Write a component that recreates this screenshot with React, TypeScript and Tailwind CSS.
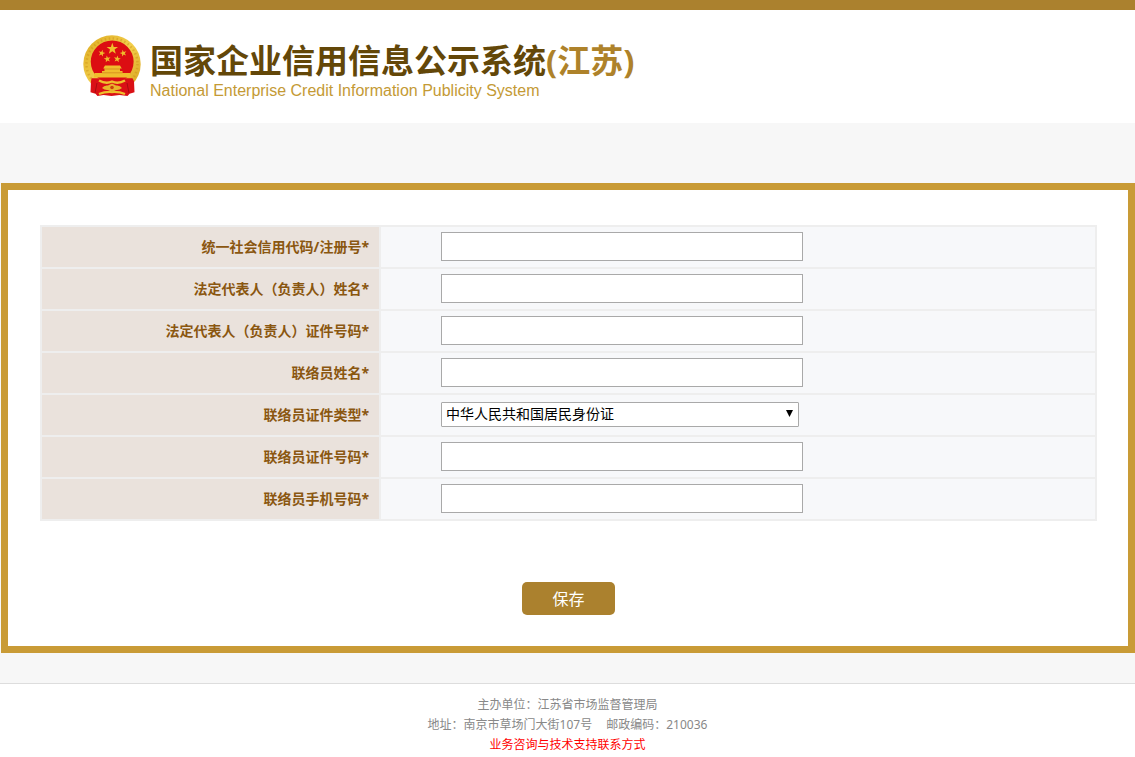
import React, { useState } from "react";

const fields = [
  { name: "regNo", label: "统一社会信用代码/注册号*" },
  { name: "legalName", label: "法定代表人（负责人）姓名*" },
  { name: "legalCertNo", label: "法定代表人（负责人）证件号码*" },
  { name: "liaisonName", label: "联络员姓名*" },
  {
    name: "certType",
    label: "联络员证件类型*",
    options: ["中华人民共和国居民身份证"],
  },
  { name: "certNo", label: "联络员证件号码*" },
  { name: "mobile", label: "联络员手机号码*" },
];

const STAR =
  "M0 -6 L1.4 -1.9 L5.7 -1.9 L2.3 0.7 L3.5 4.9 L0 2.4 L-3.5 4.9 L-2.3 0.7 L-5.7 -1.9 L-1.4 -1.9 Z";

const Emblem = () => (
  <svg viewBox="0 0 60 64" className="w-[60px] h-16 shrink-0" aria-hidden="true">
    <defs>
      <linearGradient id="gold" x1="0" y1="0" x2="1" y2="1">
        <stop offset="0" stopColor="#dca91f" />
        <stop offset="0.5" stopColor="#f3cf4c" />
        <stop offset="1" stopColor="#d69f1c" />
      </linearGradient>
    </defs>
    <circle cx="30" cy="30" r="28.7" fill="url(#gold)" />
    <circle
      cx="30"
      cy="30"
      r="25.5"
      fill="none"
      stroke="#c98d17"
      strokeWidth="2.5"
      strokeDasharray="1.5 2.5"
      opacity="0.45"
    />
    <circle cx="30.2" cy="27.8" r="21.4" fill="#dc0d12" />
    <g fill="#f0bd2c">
      <path d={STAR} transform="translate(30.3 14.8)" />
      <path d={STAR} transform="translate(19.7 19.2) rotate(15) scale(.6)" />
      <path d={STAR} transform="translate(25.3 25) rotate(-10) scale(.6)" />
      <path d={STAR} transform="translate(35.2 25) rotate(10) scale(.6)" />
      <path d={STAR} transform="translate(41.3 19.2) rotate(-15) scale(.6)" />
      <path d="M23 31.5h15l1.8 3H38v2.5h2.5v2H48l.8 4.500H11.800l.7-4.500H20v-2h2.500v-2.500h-1.300z" />
    </g>
    <path d="M22.5 35h15.5M20 38.8h20.5" stroke="#c9761a" strokeWidth="0.6" />
    <path
      d="M9.500 44.200h41l1.500 3 .5 11-5 1.500-2 2.300-8-1-8 1-8-1-6 1-2-2.300-5-1.500.5-11z"
      fill="#da1015"
    />
    <path
      d="M17 46.500q7 4 13 1 6 3 13-1M17 60q6-2.500 13-2 7-.5 13 2"
      fill="none"
      stroke="#efc02d"
      strokeWidth="2.4"
    />
    <path
      d="M20 54q2-3 6-2.500l4-2 4 2q4-.5 6 2.500-3 2.500-6 2l-4 2-4-2q-3 .5-6-2z"
      fill="#e9b42c"
    />
    <circle cx="30" cy="53.5" r="1.8" fill="#c9420f" />
    <path d="M15 49l-2 10M45 49l2 10" stroke="#a90b10" strokeWidth="1" />
  </svg>
);

const Header = () => (
  <header className="border-t-10 border-[#ab812e] bg-white">
    <div className="flex items-start h-[113px] pt-6 pl-[82px]">
      <Emblem />
      <div className="ml-2 pt-[7px]">
        <h1 className="text-[33px] leading-10 font-bold whitespace-nowrap text-[#634708]">
          国家企业信用信息公示系统
          <span className="text-[#ae822a]">(江苏)</span>
        </h1>
        <p className="font-['Liberation_Sans',sans-serif] text-base leading-5 whitespace-nowrap text-[#c49a35]">
          National Enterprise Credit Information Publicity System
        </p>
      </div>
    </div>
  </header>
);

const Footer = () => (
  <footer className="border-t border-[#dddddd] bg-white pt-[11px] text-center text-xs leading-5 text-[#888888]">
    <p>主办单位：江苏省市场监督管理局</p>
    <p>
      地址：南京市草场门大街107号
      <span className="ml-[14px]">邮政编码：210036</span>
    </p>
    <p>
      <a href="#contact" className="text-[#ff0000]">
        业务咨询与技术支持联系方式
      </a>
    </p>
  </footer>
);

export default function App() {
  const [values, setValues] = useState<Record<string, string>>({
    certType: "中华人民共和国居民身份证",
  });

  const onChange = (
    e: React.ChangeEvent<HTMLInputElement | HTMLSelectElement>
  ) => {
    setValues({ ...values, [e.target.name]: e.target.value });
  };

  return (
    <div className="bg-[#f7f7f7] font-['Noto_Sans','Noto_Sans_CJK_SC',sans-serif]">
      <Header />
      <main className="pt-[60px] pb-[30px] pl-px">
        <form
          className="border-7 border-[#c99b36] bg-white pt-[35px] pr-[31px] pb-[31px] pl-8"
          onSubmit={(e) => e.preventDefault()}
        >
          <table className="w-full table-fixed border-collapse text-sm">
            <tbody>
              {fields.map((field) => (
                <tr key={field.name} className="h-[42px]">
                  <th
                    scope="row"
                    className="w-[339px] border-2 border-[#eeeeee] bg-[#eae2dc] p-0 pr-[10px] text-right font-bold text-[#8a5710]"
                  >
                    <label htmlFor={field.name}>{field.label}</label>
                  </th>
                  <td className="border-2 border-[#eeeeee] bg-[#f7f8fa] p-0 pb-[2px] pl-[60px]">
                    {field.options ? (
                      <div className="relative w-[358px]">
                        <select
                          id={field.name}
                          name={field.name}
                          value={values[field.name]}
                          onChange={onChange}
                          className="block h-[25px] w-full appearance-none rounded-[1px] border border-[#a9a9a9] bg-white px-1 leading-5 text-black"
                        >
                          {field.options.map((option) => (
                            <option key={option}>{option}</option>
                          ))}
                        </select>
                        <svg
                          viewBox="0 0 6 6"
                          className="pointer-events-none absolute top-2 right-[6px] size-[7px]"
                        >
                          <path d="M0 0h6L3 6z" fill="#000" />
                        </svg>
                      </div>
                    ) : (
                      <input
                        id={field.name}
                        name={field.name}
                        type="text"
                        value={values[field.name] ?? ""}
                        onChange={onChange}
                        className="block h-[29px] w-[362px] border border-[#a9a9a9] bg-white px-1"
                      />
                    )}
                  </td>
                </tr>
              ))}
            </tbody>
          </table>
          <div className="mt-[61px] flex justify-center">
            <button
              type="submit"
              className="h-[33px] w-[93px] rounded-[5px] bg-[#ab812e] text-base text-white"
            >
              保存
            </button>
          </div>
        </form>
      </main>
      <Footer />
    </div>
  );
}
